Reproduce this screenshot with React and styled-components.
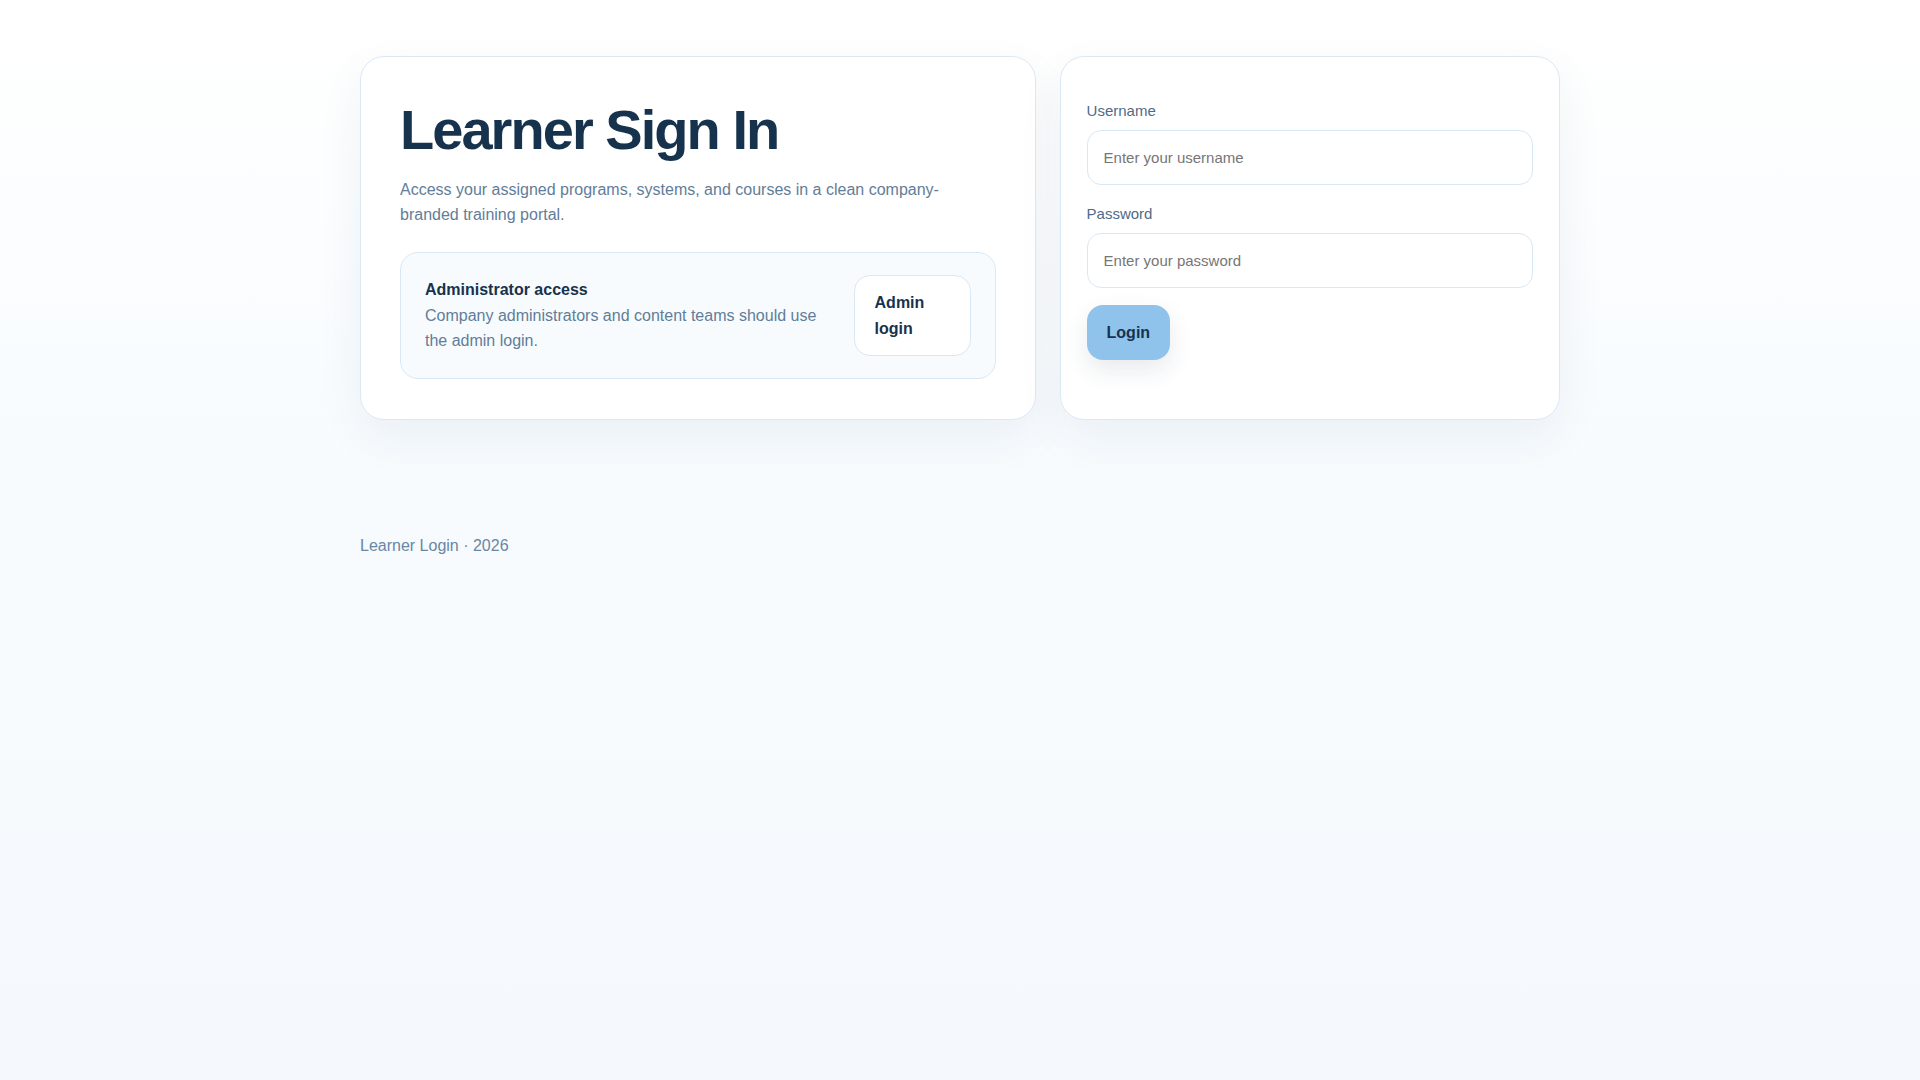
import React from "react";
import styled, { createGlobalStyle } from "styled-components";

const GlobalStyle = createGlobalStyle`
  * {
    box-sizing: border-box;
  }

  html,
  body {
    margin: 0;
    padding: 0;
  }

  body {
    min-height: 100vh;
    font-family: "Liberation Sans", Arial, sans-serif;
    color: #17324d;
    background: linear-gradient(180deg, #ffffff 0%, #f7fbfe 45%, #f5f9fd 100%);
  }
`;

const Page = styled.div`
  min-height: 100vh;
  padding: 56px 24px 40px;
`;

const Shell = styled.div`
  max-width: 1200px;
  margin: 0 auto;
`;

const Grid = styled.main`
  display: grid;
  grid-template-columns: 1.35fr 1fr;
  gap: 24px;
`;

const Card = styled.section`
  background: #ffffff;
  border: 1px solid #dbe9f5;
  border-radius: 24px;
  box-shadow: 0 18px 48px rgba(23, 50, 77, 0.06);
  padding: ${(props) => props.$padding};
`;

const Title = styled.h1`
  margin: 4px 0 0;
  font-size: 56px;
  line-height: 1.05;
  font-weight: 700;
  letter-spacing: -0.035em;
  color: #17324d;
`;

const Lead = styled.p`
  margin: 17px 0 0;
  max-width: 560px;
  font-size: 16px;
  line-height: 1.6;
  color: #627d98;
`;

const AdminBox = styled.div`
  margin-top: 24px;
  display: flex;
  align-items: center;
  gap: 16px;
  padding: 22px 24px;
  background: #f7fbfe;
  border: 1px solid #d9e8f5;
  border-radius: 18px;
`;

const AdminText = styled.div`
  flex: 1;
  min-width: 0;
`;

const AdminTitle = styled.div`
  font-size: 16px;
  line-height: 1.6;
  font-weight: 700;
  color: #17324d;
`;

const AdminBody = styled.p`
  margin: 0;
  font-size: 16px;
  line-height: 1.6;
  color: #627d98;
`;

const AdminButton = styled.a`
  flex-shrink: 0;
  width: 117px;
  padding: 14px 20px;
  background: #ffffff;
  border: 1px solid #d9e8f5;
  border-radius: 16px;
  font-size: 16px;
  line-height: 1.6;
  font-weight: 700;
  color: #17324d;
  text-decoration: none;
  cursor: pointer;
`;

const Form = styled.form`
  display: flex;
  flex-direction: column;
  gap: 19px;
`;

const Field = styled.div`
  display: flex;
  flex-direction: column;
`;

const Label = styled.label`
  margin-bottom: 9px;
  font-size: 15px;
  line-height: 20px;
  color: #4e6b89;
`;

const Input = styled.input`
  width: 100%;
  height: 55px;
  padding: 0 16px;
  border: 1px solid #d9e8f5;
  border-radius: 14px;
  background: #ffffff;
  font-family: "Liberation Sans", Arial, sans-serif;
  font-size: 15px;
  color: #17324d;
  outline: none;

  &::placeholder {
    color: #767676;
  }
`;

const LoginButton = styled.button`
  align-self: flex-start;
  margin-top: -2px;
  height: 55px;
  padding: 0 20px;
  border: none;
  border-radius: 16px;
  background: #8fc3eb;
  box-shadow: 0 10px 24px rgba(23, 50, 77, 0.1);
  font-family: "Liberation Sans", Arial, sans-serif;
  font-size: 16px;
  font-weight: 700;
  color: #17324d;
  cursor: pointer;
`;

const Footer = styled.footer`
  margin-top: 114px;
  font-size: 16px;
  line-height: 1.5;
  color: #6a86a3;
`;

export default function App() {
  return (
    <>
      <GlobalStyle />
      <Page>
        <Shell>
          <Grid>
            <Card $padding="40px 39px 40px">
              <Title>Learner Sign In</Title>
              <Lead>
                Access your assigned programs, systems, and courses in a clean
                company-branded training portal.
              </Lead>
              <AdminBox>
                <AdminText>
                  <AdminTitle>Administrator access</AdminTitle>
                  <AdminBody>
                    Company administrators and content teams should use the
                    admin login.
                  </AdminBody>
                </AdminText>
                <AdminButton href="#admin">Admin login</AdminButton>
              </AdminBox>
            </Card>
            <Card $padding="44px 26px 26px">
              <Form onSubmit={(e) => e.preventDefault()}>
                <Field>
                  <Label htmlFor="username">Username</Label>
                  <Input id="username" type="text" placeholder="Enter your username" />
                </Field>
                <Field>
                  <Label htmlFor="password">Password</Label>
                  <Input id="password" type="password" placeholder="Enter your password" />
                </Field>
                <LoginButton type="submit">Login</LoginButton>
              </Form>
            </Card>
          </Grid>
          <Footer>Learner Login · 2026</Footer>
        </Shell>
      </Page>
    </>
  );
}
